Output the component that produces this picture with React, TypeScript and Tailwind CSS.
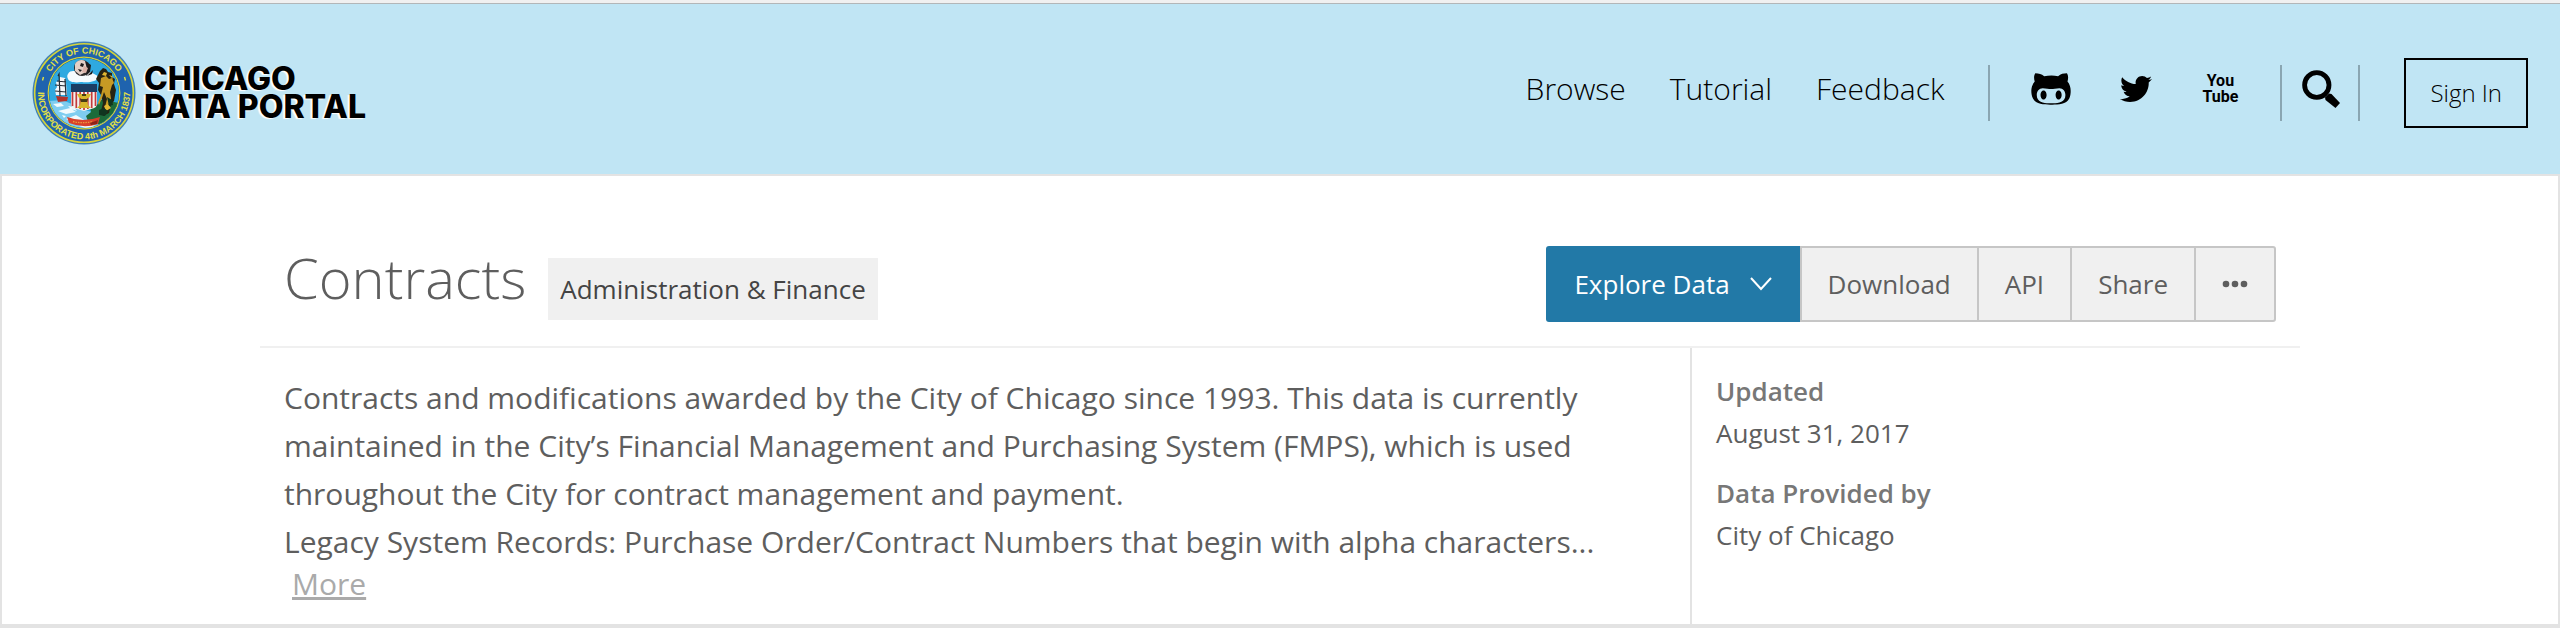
import { FaGithubAlt, FaTwitter } from "react-icons/fa";

function CitySeal() {
  return (
    <svg viewBox="0 0 104 104" className="size-26 shrink-0 overflow-visible" aria-hidden="true">
      <defs>
        <path id="ring-top" d="M12.500 52a39.500 39.500 0 0 1 79 0" />
        <path id="ring-bottom" d="M6.600 45a46 46 0 1 0 90.800 0" />
        <clipPath id="scene">
          <circle cx="52" cy="52" r="35" />
        </clipPath>
      </defs>
      <circle cx="52" cy="52" r="51.5" fill="#3f7fb5" />
      <circle cx="52" cy="52" r="49.3" fill="#1f63ae" stroke="#d5d43a" strokeWidth="1.6" />
      <circle cx="52" cy="52" r="36.4" fill="#d5d43a" />
      <circle cx="52" cy="52" r="35.2" fill="#23445c" />
      <g clipPath="url(#scene)">
        <rect x="16" y="16" width="72" height="72" fill="#2fa9e0" />
        <path d="M16 60l14-1 10 4 12 6 20 5 16 2v16H16z" fill="#7fcdf0" />
        <path d="M21 63l8-1 3 3-7 1zM26 70l12-3 6 4-10 2zM34 78l10-4 8 5-9 4zM47 85l10-3 6 3-6 3zM36 65l6 1 3 4-6-2zM30 74l4 1-2 2z" fill="#f2fafd" />
        <path d="M36 33c2-4 7-3 9-2 3-3 8-2 9 0 5-1 7 2 10 3s2 5-2 6c-5 2-10 1-13 1-6 1-12 0-13-3-1-2-1-4 0-5z" fill="#f6fbfd" />
        <circle cx="50" cy="27" r="8" fill="#2c2a2b" />
        <path d="M43 23c2-4 7-5 10-3l3 4-2 7-6 3-5-4z" fill="#e4cfc6" />
        <path d="M49 22l3 1-1 3-3-1zM46 28l4 1-2 2zM53 20l6 4-1 7-4 4 1-7zM55 35l5-2 1-4" fill="#1d1b1c" />
        <path d="M52 25l4 2-2 5-4-1z" fill="#d9b0a5" />
        <path d="M28 36l5 1 1 5 1 12H24l-1-5 2-3-1-5 3-1z" fill="#f4f6f8" />
        <path d="M26 35l1-2 1 22M33 38l1 17M23 44l11 1M23 50l11 1M25 40l9 1" stroke="#222b33" strokeWidth="1.2" fill="none" />
        <path d="M24 55l12 1-1 4-9 1z" fill="#b5322a" />
        <path d="M58 66l7-2 4-5 7-1 6 3 5 1-5 15-14 7-12-4-2-5 5-4z" fill="#1c6b3a" />
        <path d="M68 30l3-3 3 1 2 3 4 1v4l3 2-1 5 2 6-2 11-3 3-2 9-6 3-2-5 2-8-2-8-3-5 1-7-3-4 2-4z" fill="#262313" />
        <path d="M69 37l5-2 3 3 3-1 2 5-2 2-2 7 1 7-3 6-3 2 2-8-3-7-2 6-3 7-1-2 3-8 2-8-3-1z" fill="#c79a24" />
        <path d="M72 31l3 1-1 3-4-1zM77 34l3 1 1 3zM72 65l4-2 3 4-5 3z" fill="#e2b832" />
        <path d="M67 69l5-2 4 3-3 5-6-1zM75 56l5 3 1 5-4 1z" fill="#10351f" />
        <path d="M39 43h26v9H39z" fill="#1b3d63" />
        <path d="M39 51h26v12q0 4-6 5l-7 2-7-2q-6-1-6-5z" fill="#f4f1ee" />
        <path d="M40.500 51v14M44.300 51v16M48.200 51v17M52 51v18M55.800 51v17M59.700 51v16M63.500 51v14" stroke="#c33a3b" strokeWidth="1.7" />
        <path d="M45 53l14 0-2 4h-2l1 7 3 3H45l3-3 1-7h-2z" fill="#d6b52c" />
        <path d="M48 58h8l-1 3h-6zM50 53h4v2h-4z" fill="#473c14" />
        <path d="M35 76q16 6 33 0l-2 7q-14 5-29-1z" fill="#d8402b" />
        <path d="M41 80.500q10 2.500 20-.3" stroke="#e99a3e" strokeWidth="1.3" strokeDasharray="1.5 1" fill="none" />
        <path d="M58 82l8-3-1 4-6 1z" fill="#8c2419" />
      </g>
      <g fill="#e3e045" fontFamily="Liberation Sans, sans-serif" fontWeight="700" fontSize="9" textAnchor="middle">
        <text>
          <textPath href="#ring-top" startOffset="50%">CITY OF CHICAGO</textPath>
        </text>
        <text>
          <textPath href="#ring-bottom" startOffset="50%">INCORPORATED 4th MARCH 1837</textPath>
        </text>
      </g>
      <path d="M10.500 39.500l1-3.500M93.500 39.500l-1-3.500" stroke="#e3e045" strokeWidth="1.4" />
    </svg>
  );
}

function SearchIcon() {
  return (
    <svg viewBox="0 0 38 38" className="size-[38px]" aria-hidden="true">
      <ellipse cx="14.800" cy="15" rx="12.2" ry="12.4" fill="none" stroke="#000" strokeWidth="4.800" />
      <path d="M23 27.500L27 23.500l2.500.5 8.500 9-4.500 5L23.500 30z" fill="#000" />
    </svg>
  );
}

const Divider = () => <span className="h-14 w-0.5 bg-[#8aa6b2]" />;

const navLinks = ["Browse", "Tutorial", "Feedback"];
const actions = ["Download", "API", "Share"];
const facts = [
  { term: "Updated", value: "August 31, 2017" },
  { term: "Data Provided by", value: "City of Chicago" },
];

export default function App() {
  return (
    <div className="flex min-h-screen flex-col bg-white font-['Open_Sans',sans-serif] text-[#5e5e5e]">
      <div className="h-[3px] bg-[#f0f0f0]" />
      <header className="flex items-center justify-between border-t border-[#b2b6b8] bg-[#c0e5f4] px-8 pt-[37px] pb-[29px]">
        <a href="#home" className="flex items-center gap-2 text-black" aria-label="Chicago Data Portal">
          <CitySeal />
          <span className="font-[Inter,sans-serif] text-[32px] leading-7 font-extrabold [text-shadow:-2px_1px_1px_#fff]">
            CHICAGO
            <br />
            DATA PORTAL
          </span>
        </a>
        <div className="flex items-center text-black">
          <nav className="flex gap-11 pr-11 pb-2 text-[30px] leading-10 font-light">
            {navLinks.map((label) => (
              <a key={label} href={`#${label.toLowerCase()}`}>
                {label}
              </a>
            ))}
          </nav>
          <Divider />
          <div className="flex items-center gap-12 px-10 pb-2">
            <a href="#github" aria-label="GitHub">
              <FaGithubAlt className="size-[42px]" />
            </a>
            <a href="#twitter" aria-label="Twitter">
              <FaTwitter className="size-8" />
            </a>
            <a
              href="#youtube"
              className="flex flex-col items-center px-0.5 font-[Roboto,sans-serif] text-base leading-4 font-bold"
            >
              <span>You</span>
              <span>Tube</span>
            </a>
          </div>
          <Divider />
          <button type="button" aria-label="Search" className="pr-[18px] pb-2 pl-5">
            <SearchIcon />
          </button>
          <Divider />
          <a
            href="#sign-in"
            className="ml-11 flex h-[70px] items-center border-2 border-black px-6 text-2xl font-light"
          >
            Sign In
          </a>
        </div>
      </header>

      <main className="flex grow flex-col border-2 border-b-4 border-[#e3e3e3]">
        <div className="mx-auto flex w-full max-w-[2040px] grow flex-col">
          <div className="flex items-start justify-between border-b-2 border-[#f0f0f0] px-6 pt-[70px] pb-6">
            <div className="flex items-baseline gap-[22px] pt-1.5">
              <h1 className="text-[56px] leading-[50px] font-light">Contracts</h1>
              <span className="bg-[#f0f0f0] px-3 text-[26px] leading-[62px] text-[#444]">
                Administration &amp; Finance
              </span>
            </div>
            <div className="flex h-[76px] text-[26px]">
              <button
                type="button"
                className="flex items-center gap-5 rounded-l-[3px] bg-[#2279a7] px-7 font-medium text-white"
              >
                Explore Data
                <svg viewBox="0 0 22 14" className="h-3.5 w-[22px]" aria-hidden="true">
                  <path d="M1 1l10 11L21 1" fill="none" stroke="#fff" strokeWidth="2" />
                </svg>
              </button>
              {actions.map((label) => (
                <button
                  key={label}
                  type="button"
                  className="border-y-2 border-l-2 border-[#c6c6c6] bg-[#f0f0f0] px-[26px]"
                >
                  {label}
                </button>
              ))}
              <button
                type="button"
                aria-label="More actions"
                className="rounded-r-[3px] border-2 border-[#c6c6c6] bg-[#f0f0f0] px-[26px]"
              >
                <svg viewBox="0 0 26 8" className="h-2 w-[26px]" aria-hidden="true">
                  <g fill="#5e5e5e">
                    <circle cx="4" cy="4" r="3.300" />
                    <circle cx="13" cy="4" r="3.300" />
                    <circle cx="22" cy="4" r="3.300" />
                  </g>
                </svg>
              </button>
            </div>
          </div>

          <div className="flex grow">
            <div className="grow basis-0 pt-[26px] pl-6">
              <p className="max-w-[1330px] text-[30px] leading-[48px]">
                Contracts and modifications awarded by the City of Chicago since 1993. This data is currently
                maintained in the City’s Financial Management and Purchasing System (FMPS), which is used
                throughout the City for contract management and payment.
                <br />
                Legacy System Records: Purchase Order/Contract Numbers that begin with alpha characters...
              </p>
              <button type="button" className="ml-2 block text-[30px] leading-9 text-[#aaa] underline">
                More
              </button>
            </div>
            <dl className="flex w-[610px] flex-col gap-[18px] border-l-2 border-[#e3e3e3] pt-[22px] pl-6 text-[26px] leading-[42px]">
              {facts.map(({ term, value }) => (
                <div key={term}>
                  <dt className="font-semibold text-[#777]">{term}</dt>
                  <dd>{value}</dd>
                </div>
              ))}
            </dl>
          </div>
        </div>
      </main>
    </div>
  );
}
